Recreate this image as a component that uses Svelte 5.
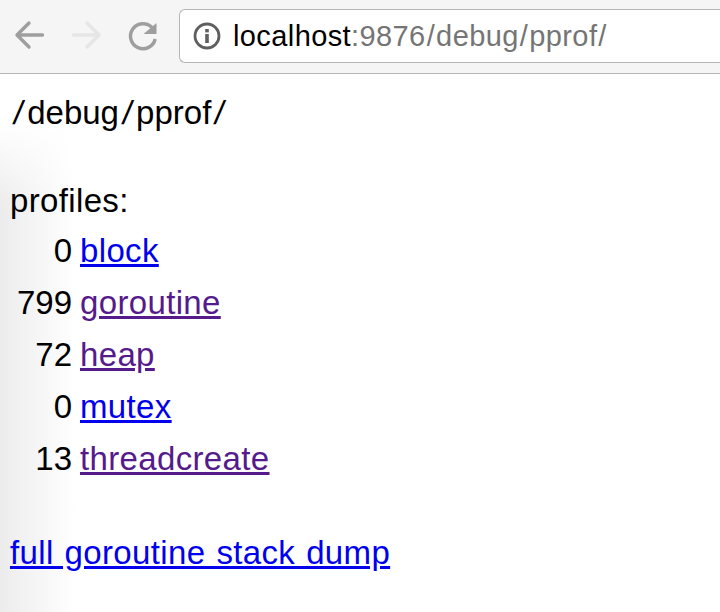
<script>
  const rows = [
    { n: 0, name: 'block', seen: false },
    { n: 799, name: 'goroutine', seen: true },
    { n: 72, name: 'heap', seen: true },
    { n: 0, name: 'mutex', seen: false },
    { n: 13, name: 'threadcreate', seen: true }
  ];
</script>

<div class="page">
  <header class="toolbar">
    <div class="navs">
      <svg class="ic" width="36" height="36" viewBox="0 0 36 36" fill="none" stroke="#9e9e9e" stroke-width="3.4" stroke-linecap="round" stroke-linejoin="round"><path d="M30.5 18H6M17 6 5 18l12 12"/></svg>
      <svg class="ic" width="36" height="36" viewBox="0 0 36 36" fill="none" stroke="#e6e6e6" stroke-width="3.4" stroke-linecap="round" stroke-linejoin="round"><path d="M5.5 18H30M19 6l12 12-12 12"/></svg>
      <svg class="ic" width="36" height="36" viewBox="0 0 36 36" fill="none"><path d="M28 10.5A12.5 12.5 0 1 0 31.2 22" stroke="#9e9e9e" stroke-width="3.4"/><path d="M19.5 17 32.5 6v11z" fill="#9e9e9e"/></svg>
    </div>
    <div class="omni">
      <svg class="info" width="28" height="28" viewBox="0 0 28 28" fill="none"><circle cx="14" cy="14" r="12" stroke="#5f5f5f" stroke-width="2.8"/><rect x="12.2" y="12" width="3.6" height="9" fill="#5f5f5f"/><rect x="12.2" y="7" width="3.6" height="3.4" fill="#5f5f5f"/></svg>
      <span class="url"><span class="host">localhost</span>:9876<span class="sl">/</span>debug<span class="sl">/</span>pprof<span class="sl">/</span></span>
    </div>
  </header>
  <main class="content">
    <div class="title"><span class="sl">/</span>debug<span class="sl">/</span>pprof<span class="sl">/</span></div>
    <div class="profiles">profiles:</div>
    <table>
      <tbody>
        {#each rows as r}
          <tr>
            <td class="num">{r.n}</td>
            <td><a href="#{r.name}" class:seen={r.seen}>{r.name}</a></td>
          </tr>
        {/each}
      </tbody>
    </table>
    <div class="dump"><a href="#full">full goroutine stack dump</a></div>
  </main>
</div>

<style>
  :global(body) { margin: 0; background: #fff; }
  .page { width: 720px; height: 612px; overflow: hidden; font-family: "Liberation Sans", Arial, sans-serif; }
  .toolbar { height: 73px; background: #f5f5f5; border-bottom: 1px solid #b5b5b5; display: flex; align-items: flex-start; }
  .navs { display: flex; gap: 20px; padding: 17px 0 0 12px; width: 179px; box-sizing: border-box; flex: none; }
  .ic { display: block; flex: none; }
  .omni { margin-top: 9px; height: 52px; flex: 1; background: #fff; border: 1px solid #b5b5b5; border-right: 0; border-radius: 6px 0 0 6px; display: flex; align-items: center; padding-left: 13px; gap: 12px; }
  .info { flex: none; }
  .url { font-size: 29px; letter-spacing: 0.4px; color: #757575; white-space: nowrap; }
  .host { color: #000; }
  .sl { padding: 0 1px; }
  .content { height: 538px; padding: 0 10px; background: linear-gradient(to bottom, #fff 50px, rgba(255,255,255,0) 130px), linear-gradient(to right, #ececec 0, #fff 75px); font-size: 33px; letter-spacing: 0.35px; color: #000; }
  .title { padding-top: 20px; line-height: 37px; letter-spacing: 0; }
  .title .sl { display: inline-block; padding: 0 4px; transform: skewX(-9deg); }
  .profiles { margin-top: 51px; line-height: 37px; }
  table { border-collapse: collapse; border-spacing: 0; margin-top: 5px; }
  td { padding: 0; height: 52px; line-height: 37px; }
  .num { width: 62px; text-align: right; padding-right: 8px; letter-spacing: 0; }
  a { color: #0000ee; text-decoration: underline; }
  a.seen { color: #551a8b; }
  .dump { margin-top: 50px; line-height: 37px; word-spacing: 1.5px; }
</style>
